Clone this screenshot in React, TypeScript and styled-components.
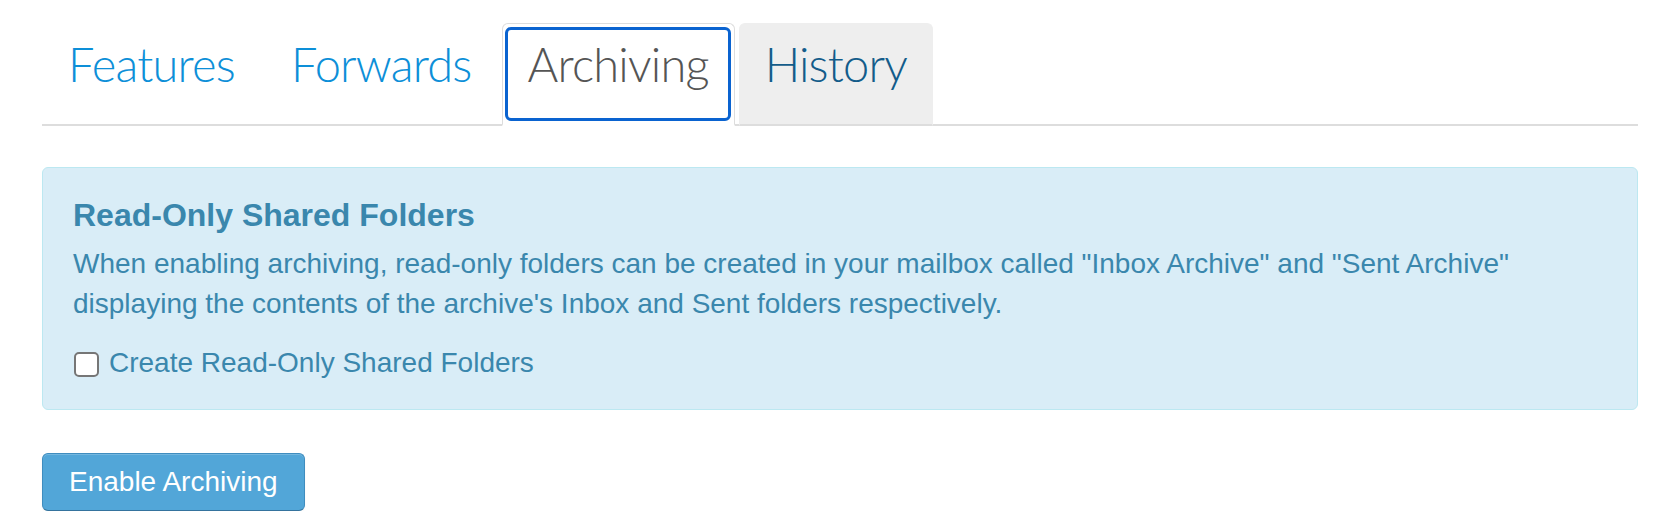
import styled, { createGlobalStyle } from "styled-components";

const GlobalStyle = createGlobalStyle`
  html, body {
    margin: 0;
    padding: 0;
    background: #fff;
  }
`;

const Page = styled.div`
  padding: 23px 26px 0 42px;
  font-family: "Liberation Sans", Arial, Helvetica, sans-serif;
  font-size: 28px;
  line-height: 40px;
  color: #333;
`;

const TabList = styled.ul`
  display: flex;
  margin: 0;
  padding: 0;
  list-style: none;
  border-bottom: 2px solid #ddd;
`;

const TabItem = styled.li`
  margin: 0 4px -2px 0;
`;

const TabLink = styled.a<{ $active?: boolean; $hover?: boolean }>`
  position: relative;
  display: block;
  padding: 6px 25px 26px;
  font-family: "Lato", "Roboto", sans-serif;
  font-weight: 300;
  font-size: 47px;
  letter-spacing: -0.8px;
  line-height: 68px;
  text-decoration: none;
  color: #0d8fd8;
  border: 1px solid transparent;
  border-bottom-width: 2px;
  border-radius: 6px 6px 0 0;
  cursor: pointer;

  ${(p) =>
    p.$hover &&
    `
    color: #135c8a;
    background: #eee;
    border-color: #eee #eee #ddd;
  `}

  ${(p) =>
    p.$active &&
    `
    color: #555;
    background: #fff;
    border-color: #ddd #ddd transparent;

    &::after {
      content: "";
      position: absolute;
      top: 3px;
      left: 2px;
      right: 3px;
      bottom: 3px;
      border: 3px solid #0a63d0;
      border-radius: 6px;
      pointer-events: none;
    }
  `}
`;

const Alert = styled.div`
  margin-top: 41px;
  padding: 30px 30px 26px;
  background: #d9edf7;
  border: 1px solid #bce8f1;
  border-radius: 6px;
  color: #3a87ad;
`;

const AlertTitle = styled.h4`
  margin: 0 0 11px;
  font-size: 32px;
  line-height: 35px;
  font-weight: bold;
`;

const AlertText = styled.p`
  margin: 0;
`;

const CheckRow = styled.label`
  display: flex;
  align-items: center;
  gap: 10px;
  margin-top: 19px;
  cursor: pointer;
`;

const Check = styled.input`
  appearance: none;
  box-sizing: border-box;
  width: 25px;
  height: 25px;
  margin: 2px 0 0 1px;
  background: #fff;
  border: 2px solid #767676;
  border-radius: 5px;
`;

const Button = styled.button`
  margin-top: 43px;
  padding: 8px 26px;
  font-family: inherit;
  font-size: 28px;
  line-height: 40px;
  color: #fff;
  background: #52a6d8;
  border: 1px solid #3f8dbf;
  border-bottom-color: #35739d;
  border-radius: 6px;
  box-shadow: inset 0 1px 0 rgba(255, 255, 255, 0.2), 0 1px 2px rgba(0, 0, 0, 0.05);
  cursor: pointer;
`;

const tabs = [
  { label: "Features" },
  { label: "Forwards" },
  { label: "Archiving", active: true },
  { label: "History", hover: true },
];

export default function App() {
  return (
    <Page>
      <GlobalStyle />
      <TabList>
        {tabs.map((tab) => (
          <TabItem key={tab.label}>
            <TabLink $active={tab.active} $hover={tab.hover}>
              {tab.label}
            </TabLink>
          </TabItem>
        ))}
      </TabList>

      <Alert>
        <AlertTitle>Read-Only Shared Folders</AlertTitle>
        <AlertText>
          When enabling archiving, read-only folders can be created in your mailbox called "Inbox Archive" and "Sent
          Archive" displaying the contents of the archive's Inbox and Sent folders respectively.
        </AlertText>
        <CheckRow>
          <Check type="checkbox" />
          Create Read-Only Shared Folders
        </CheckRow>
      </Alert>

      <Button type="button">Enable Archiving</Button>
    </Page>
  );
}
